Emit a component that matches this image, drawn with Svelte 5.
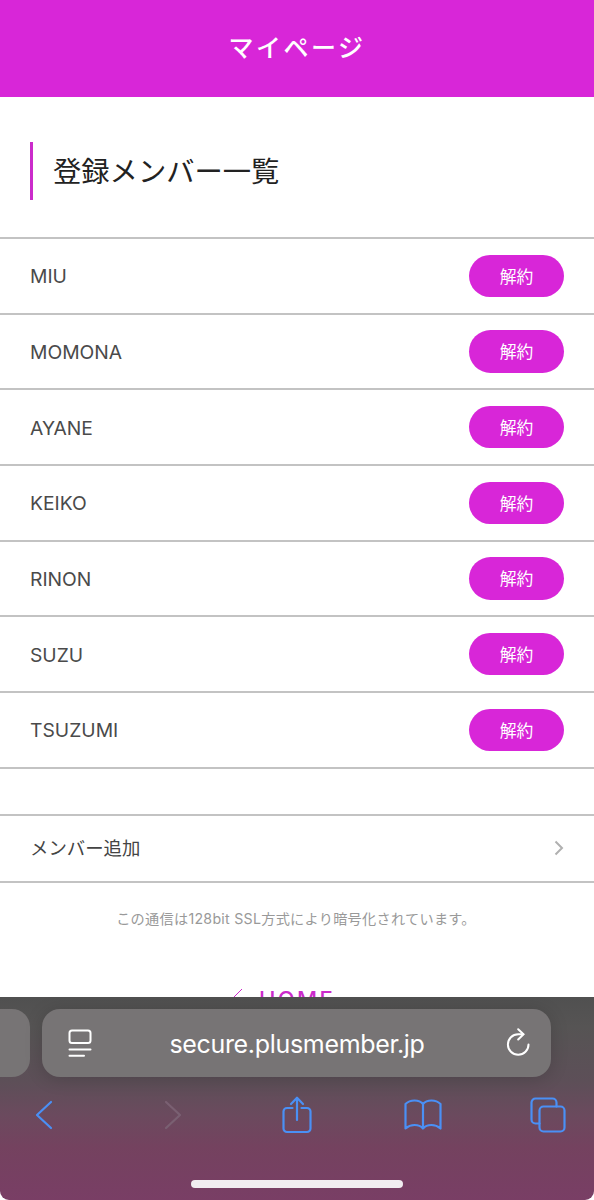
<script lang="ts">
  let members = $state(["MIU", "MOMONA", "AYANE", "KEIKO", "RINON", "SUZU", "TSUZUMI"]);
</script>

<div class="screen">
  <div class="page">
    <header><h1>マイページ</h1></header>

    <h2>登録メンバー一覧</h2>

    <ul class="members">
      {#each members as member}
        <li>
          <span class="name">{member}</span>
          <button class="cancel">解約</button>
        </li>
      {/each}
    </ul>

    <a class="add-member" href="#add">
      <span>メンバー追加</span>
      <svg width="10" height="16" viewBox="0 0 10 16">
        <path d="M1.5 1.5 8 8l-6.500 6.500" />
      </svg>
    </a>

    <p class="ssl">この通信は<span>128bit SSL</span>方式により暗号化されています。</p>

    <a class="home" href="#home">
      <svg width="12" height="22" viewBox="0 0 12 22">
        <path d="M11 1 1 11l10 10" />
      </svg>
      <span>HOME</span>
    </a>
  </div>

  <div class="browser">
    <div class="tabs">
      <div class="prev-tab"></div>
      <div class="address">
        <svg width="26" height="30" viewBox="0 0 26 30">
          <rect x="2.500" y="2.500" width="21" height="12.500" rx="2.500" />
          <path d="M2.500 21.500h21M2.500 27.800h14.500" />
        </svg>
        <span class="url">secure.plusmember.jp</span>
        <svg width="26" height="30" viewBox="0 0 26 30">
          <path d="M23.500 16.500a10.300 10.300 0 1 1-10.300-10.300h5" />
          <path d="M13.200 1.200l5.300 5-5.300 5.300" />
        </svg>
      </div>
    </div>

    <nav>
      <svg width="18" height="30" viewBox="0 0 18 30">
        <path d="M16 2 2 15l14 13" />
      </svg>
      <svg class="disabled" width="18" height="30" viewBox="0 0 18 30">
        <path d="M2 2l14 13L2 28" />
      </svg>
      <svg class="share" width="30" height="38" viewBox="0 0 30 38">
        <path d="M10.500 12H5a3.500 3.500 0 0 0-3.500 3.500v17A3.500 3.500 0 0 0 5 36h20a3.500 3.500 0 0 0 3.500-3.500v-17A3.500 3.500 0 0 0 25 12h-5.500" />
        <path d="M15 24V2M9 8l6-6.300L21 8" />
      </svg>
      <svg class="book" width="38" height="32" viewBox="0 0 38 32">
        <path d="M19 5c-2-2.500-5-3.500-8.500-3.500S4 2.500 1.500 5v24.500c2.500-2.200 5.500-3.500 9-3.500s6.500 1 8.500 3.500c2-2.500 5-3.500 8.500-3.500s6.500 1.300 9 3.500V5C34 2.500 31 1.500 27.500 1.500S21 2.500 19 5zM19 5v24.500" />
      </svg>
      <svg class="windows" width="36" height="36" viewBox="0 0 36 36">
        <path d="M9.500 26.500H5.500a4 4 0 0 1-4-4v-17a4 4 0 0 1 4-4h17a4 4 0 0 1 4 4v4" />
        <rect x="9.500" y="9.500" width="25" height="25" rx="4" />
      </svg>
    </nav>

    <div class="home-indicator"></div>
  </div>
</div>

<style>
  :global(body) {
    background: #fff;
  }

  .screen {
    display: flex;
    flex-direction: column;
    width: 594px;
    height: 1200px;
    overflow: hidden;
    background: #fff;
    font-family: Inter, "Noto Sans CJK JP", sans-serif;
  }

  .page {
    height: 997px;
    overflow: hidden;
    color: #4a4a4a;
  }

  header {
    display: flex;
    align-items: center;
    justify-content: center;
    height: 97px;
    background: #d826d8;
  }

  h1 {
    margin: 0 0 2px;
    color: #fff;
    font-size: 25px;
    font-weight: 500;
    line-height: 36px;
    letter-spacing: 2.500px;
  }

  h2 {
    margin: 45px 30px 37px;
    padding-left: 20px;
    border-left: 3px solid #cb2bcb;
    color: #222;
    font-size: 28.300px;
    font-weight: 400;
    line-height: 60px;
    height: 58px;
  }

  .members {
    margin: 0;
    padding: 0;
    border-top: 2px solid #c3c3c3;
    list-style: none;
  }

  .members li {
    display: flex;
    align-items: center;
    justify-content: space-between;
    box-sizing: border-box;
    height: 75.67px;
    padding: 0 30px;
    border-bottom: 2px solid #c3c3c3;
  }

  .name {
    padding-top: 1px;
    font-size: 19.300px;
    font-weight: 370;
  }

  .cancel {
    width: 95px;
    height: 42.500px;
    padding: 0;
    border: none;
    border-radius: 22px;
    background: #d826d8;
    color: #fff;
    font-family: inherit;
    font-size: 16.800px;
  }

  .add-member {
    display: flex;
    align-items: center;
    justify-content: space-between;
    height: 65px;
    margin-top: 45px;
    padding: 0 30px;
    border-top: 2px solid #c3c3c3;
    border-bottom: 2px solid #c3c3c3;
    color: #444;
    font-size: 18.400px;
    text-decoration: none;
  }

  .add-member span {
    padding-bottom: 2px;
  }

  svg {
    flex: none;
    fill: none;
    stroke: currentColor;
    stroke-width: 2;
  }

  .add-member svg {
    color: #b0b0b0;
  }

  .ssl {
    margin: 25px 0 0;
    padding-right: 2px;
    color: #999;
    font-size: 14.200px;
    line-height: 22px;
    letter-spacing: 0.260px;
    text-align: center;
  }

  .home {
    display: flex;
    align-items: center;
    gap: 16px;
    margin: 54px 0 0 231px;
    color: #cb2bcb;
    font-size: 22px;
    font-weight: 500;
    line-height: 30px;
    letter-spacing: 2.400px;
    text-decoration: none;
  }

  .home svg {
    stroke-width: 1;
  }

  .browser {
    display: flex;
    flex-direction: column;
    height: 203px;
    border-radius: 0 0 9px 9px;
    background: linear-gradient(#505050 0, #565454 30px, #5d4f58 85px, #6b4a5e 118px, #74425f 150px, #793e65 203px);
  }

  .tabs {
    display: flex;
    gap: 12px;
    height: 68px;
    padding-top: 12px;
  }

  .prev-tab {
    width: 30px;
    border-radius: 0 18px 18px 0;
    background: #777475;
  }

  .address {
    display: flex;
    align-items: center;
    justify-content: space-between;
    box-sizing: border-box;
    width: 509px;
    padding: 0 20px 0 25px;
    border-radius: 18px;
    background: #777475;
    box-shadow: 0 2px 18px rgba(0, 0, 0, 0.16);
    color: #fff;
  }

  .url {
    margin-right: 4px;
    padding-top: 1px;
    font-size: 25px;
    font-weight: 380;
    letter-spacing: -0.320px;
  }

  .address svg {
    stroke-linecap: round;
  }

  nav {
    display: flex;
    align-items: center;
    height: 38px;
    padding: 19px 28px 0 35px;
    color: #4a90f5;
  }

  nav svg {
    stroke-width: 2.200;
    stroke-linecap: round;
    stroke-linejoin: round;
  }

  .disabled {
    margin-left: 111px;
    color: #7a6072;
  }

  .share {
    margin-left: 100px;
  }

  .book {
    margin-left: 92px;
  }

  .windows {
    margin-left: auto;
  }

  .home-indicator {
    width: 212px;
    height: 8px;
    margin: 46px 0 0 191px;
    border-radius: 4px;
    background: #f1edf0;
  }
</style>
